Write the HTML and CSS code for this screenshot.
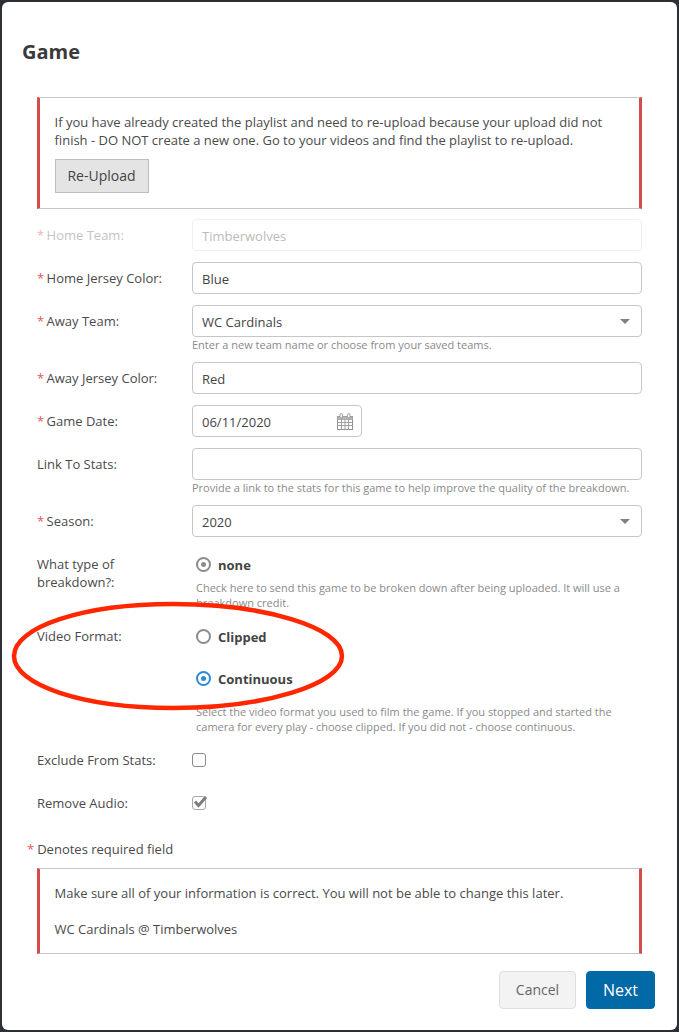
FILE: index.html
```html
<!DOCTYPE html>
<html lang="en">
<head>
<meta charset="utf-8">
<title>Game</title>
<link rel="stylesheet" href="styles.css">
</head>
<body>
<div class="modal">
  <h1 class="title">Game</h1>
  <div class="form">
    <div class="callout callout-top">
      <p class="callout-text">If you have already created the playlist and need to re-upload because your upload did not finish - DO NOT create a new one. Go to your videos and find the playlist to re-upload.</p>
      <button class="btn-reupload" type="button">Re-Upload</button>
    </div>

    <div class="row disabled">
      <div class="label"><span class="req">*</span> Home Team:</div>
      <div class="control"><div class="input">Timberwolves</div></div>
    </div>
    <div class="row">
      <div class="label"><span class="req">*</span> Home Jersey Color:</div>
      <div class="control"><div class="input">Blue</div></div>
    </div>
    <div class="row">
      <div class="label"><span class="req">*</span> Away Team:</div>
      <div class="control">
        <div class="input select">WC Cardinals<span class="caret"></span></div>
        <div class="help">Enter a new team name or choose from your saved teams.</div>
      </div>
    </div>
    <div class="row">
      <div class="label"><span class="req">*</span> Away Jersey Color:</div>
      <div class="control"><div class="input">Red</div></div>
    </div>
    <div class="row">
      <div class="label"><span class="req">*</span> Game Date:</div>
      <div class="control">
        <div class="input date">06/11/2020
          <svg class="cal" width="16" height="17" viewBox="0 0 16 17" aria-hidden="true">
            <rect x="0.5" y="3.5" width="15" height="13" fill="none" stroke="#8f8f8f"/>
            <path d="M0.5 6.5h15M0.5 9.5h15M0.5 12.5h15M4.5 6.5v10M8 6.5v10M11.5 6.5v10" stroke="#a0a0a0" stroke-width="1" fill="none"/>
            <path d="M0.5 3.5h15v3h-15z" fill="#b5b5b5"/>
            <rect x="3" y="0.5" width="2.4" height="4.5" rx="1.2" fill="#fff" stroke="#8a8a8a" stroke-width="0.8"/>
            <rect x="10.6" y="0.5" width="2.4" height="4.5" rx="1.2" fill="#fff" stroke="#8a8a8a" stroke-width="0.8"/>
          </svg>
        </div>
      </div>
    </div>
    <div class="row">
      <div class="label">Link To Stats:</div>
      <div class="control">
        <div class="input"></div>
        <div class="help">Provide a link to the stats for this game to help improve the quality of the breakdown.</div>
      </div>
    </div>
    <div class="row">
      <div class="label"><span class="req">*</span> Season:</div>
      <div class="control"><div class="input select">2020<span class="caret"></span></div></div>
    </div>
    <div class="row row-breakdown">
      <div class="label">What type of breakdown?:</div>
      <div class="control">
        <div class="radio-line"><span class="radio checked"></span><span class="radio-text">none</span></div>
        <div class="help help-radio">Check here to send this game to be broken down after being uploaded. It will use a breakdown credit.</div>
      </div>
    </div>
    <div class="row row-format">
      <div class="label">Video Format:</div>
      <div class="control">
        <div class="radio-line"><span class="radio"></span><span class="radio-text">Clipped</span></div>
        <div class="radio-line radio-second"><span class="radio active"></span><span class="radio-text">Continuous</span></div>
        <div class="help help-radio">Select the video format you used to film the game. If you stopped and started the camera for every play - choose clipped. If you did not - choose continuous.</div>
      </div>
    </div>
    <div class="row row-check row-exclude">
      <div class="label">Exclude From Stats:</div>
      <div class="control"><span class="check"></span></div>
    </div>
    <div class="row row-check">
      <div class="label">Remove Audio:</div>
      <div class="control">
        <span class="check check-on">
          <svg class="tick" width="16" height="14" viewBox="0 0 16 14" aria-hidden="true"><path d="M3 6.5l3.5 4L14 2" fill="none" stroke="#7d7d7d" stroke-width="3"/></svg>
        </span>
      </div>
    </div>

    <div class="required-note"><span class="req req-note">*</span>Denotes required field</div>

    <div class="callout callout-bottom">
      <p class="callout-text">Make sure all of your information is correct. You will not be able to change this later.</p>
      <p class="callout-text callout-names">WC Cardinals @ Timberwolves</p>
    </div>
  </div>
  <div class="footer">
    <button class="btn btn-cancel" type="button">Cancel</button>
    <button class="btn btn-next" type="button">Next</button>
  </div>

  <svg class="annotation" width="341" height="116" viewBox="0 0 341 116" aria-hidden="true">
    <path d="M165 7C255 7 334 30 334 59C334 88 255 111 165 111C75 111 6 88 6 59C6 30 75 7 165 7Z" fill="none" stroke="#ff2600" stroke-width="4.5"/>
  </svg>
</div>
</body>
</html>
```
FILE: styles.css
```css
* { box-sizing: border-box; }
html, body { margin: 0; height: 100%; }
body {
  background: #2b2f36;
  font-family: "Open Sans", "Liberation Sans", sans-serif;
  font-size: 13px;
  line-height: 18px;
  color: #4a4a4a;
  padding: 2px;
}
.modal {
  position: relative;
  background: #fff;
  border-radius: 6px;
  height: 1028px;
  padding: 0 35px;
  overflow: hidden;
}
.title {
  margin: 0 0 0 -15px;
  padding-top: 36px;
  height: 95px;
  font-size: 20px;
  line-height: 28px;
  font-weight: 700;
  color: #3a3a3a;
}
.callout {
  border: 1px solid #c6c6c6;
  border-left: 3px solid #d64b4b;
  border-right: 3px solid #d64b4b;
  padding: 15px 15px 0 14.5px;
}
.callout-top { height: 112px; margin-bottom: 10px; }
.callout-bottom { height: 86px; }
.callout-text { margin: 0; }
.callout-names { margin-top: 18px; }
.btn-reupload {
  display: block;
  margin-top: 10px;
  width: 94px;
  height: 34px;
  padding: 0;
  font: inherit;
  font-size: 14px;
  color: #444;
  background: #e4e4e4;
  border: 1px solid #bdbdbd;
}
.row {
  display: flex;
  margin-bottom: 11px;
}
.label {
  width: 155px;
  flex: none;
  padding: 7px 20px 0 0;
  color: #4a4a4a;
}
.label .req { margin-right: -1px; }
.control { flex: 1; min-width: 0; }
.req { color: #e2595b; }
.input {
  position: relative;
  height: 32px;
  border: 1px solid #c6c6c6;
  border-radius: 4px;
  padding: 7px 9px 0;
  color: #444;
}
.disabled .label { color: #c4c4c4; }
.disabled .req { color: #f0b4b4; }
.disabled .input { border-color: #eee; color: #bbb; }
.caret {
  position: absolute;
  right: 11px;
  top: 13px;
  border-left: 5px solid transparent;
  border-right: 5px solid transparent;
  border-top: 5px solid #808080;
}
.date { width: 170px; }
.cal { position: absolute; right: 8px; top: 7px; }
.help {
  font-size: 11px;
  line-height: 14px;
  padding-top: 1px;
  margin-bottom: -1px;
  color: #8a8a8a;
}
.help-radio {
  line-height: 15px;
  padding: 0 0 0 4px;
  margin-bottom: 0;
}
.row-breakdown { margin-top: 18px; margin-bottom: 0; }
.row-breakdown .label { padding-top: 0; }
.row-breakdown .help-radio { margin-top: 7px; }
.row-format { margin-top: 17px; margin-bottom: 0; }
.row-format .label { padding-top: 0; }
.radio-line {
  display: flex;
  align-items: center;
  height: 18px;
}
.radio-second { margin-top: 24px; }
.row-format .help-radio { margin-top: 17px; }
.radio {
  position: relative;
  width: 15px;
  height: 15px;
  border: 2px solid #8c8c8c;
  border-radius: 50%;
  margin: 0 7px 0 4px;
  flex: none;
}
.radio.checked::after, .radio.active::after {
  content: "";
  position: absolute;
  left: 3px;
  top: 3px;
  width: 5px;
  height: 5px;
  border-radius: 50%;
  background: #8c8c8c;
}
.radio.active { border-color: #2f88d8; }
.radio.active::after { background: #2f88d8; }
.radio-text { font-weight: 700; font-size: 13px; color: #444; margin-top: 2px; }
.row-check { margin-bottom: 0; height: 43px; }
.row-exclude { margin-top: 17px; }
.row-check .label { padding-top: 0; }
.row-check .control { padding-top: 2px; }
.check {
  position: relative;
  display: block;
  width: 14px;
  height: 14px;
  border: 1px solid #8c8c8c;
  border-radius: 3px;
}
.check-on { border-color: #a8a8a8; }
.tick { position: absolute; left: -1px; top: -2px; }
.required-note {
  margin-top: 3px;
  height: 19px;
  margin-bottom: 9px;
}
.req-note { margin-left: -10px; margin-right: 3px; }
.footer {
  display: flex;
  justify-content: flex-end;
  gap: 10px;
  margin: 17px -13px 0 0;
}
.btn {
  font: inherit;
  height: 38px;
  border-radius: 4px;
  padding: 0;
}
.btn-cancel {
  width: 77px;
  font-size: 14px;
  background: #f3f3f3;
  border: 1px solid #dedede;
  color: #666;
}
.btn-next {
  width: 69px;
  font-size: 16px;
  background: #0069a6;
  border: 1px solid #0069a6;
  color: #fff;
}
.annotation {
  position: absolute;
  left: 6px;
  top: 595px;
  pointer-events: none;
}
```
